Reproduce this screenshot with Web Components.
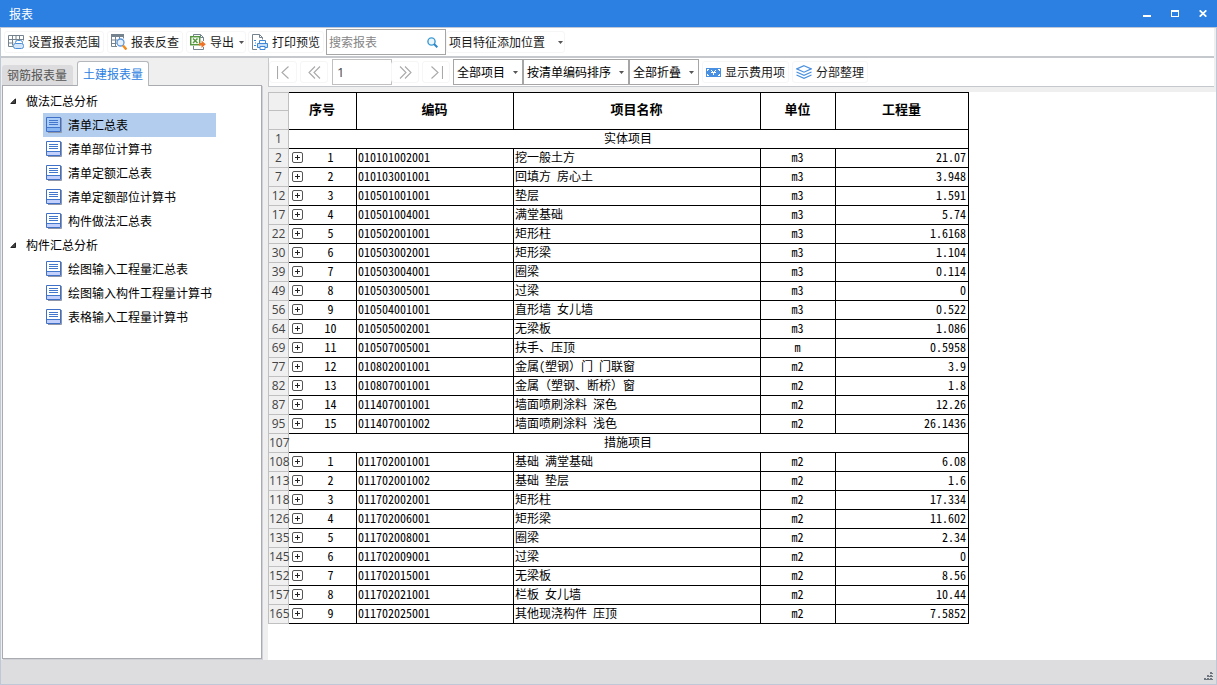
<!DOCTYPE html>
<html lang="zh-CN">
<head>
<meta charset="utf-8">
<meta name="viewport" content="width=device-width, initial-scale=1">
<title>报表</title>
<style>
  html, body { margin: 0; height: 100%; }
  body {
    font: 12px/18px "Noto Sans CJK SC", sans-serif;
    color: #1a1a1a;
    background: #efefef;
  }
</style>
</head>
<body>
<report-window></report-window>

<script>
const ICONS = {
  range: [16, 16, `<path d="M.5 1.500h15v5M.5 1.500v11H5M.5 5.500h15M.5 9h5M4.500 1.500v10M8 1.500v5M11.500 1.500v4" fill="none" stroke="#75838f"/><rect x="7.500" y="6.500" width="7" height="4" rx="2" fill="#fff" stroke="#4a8fd6"/><rect x="5.500" y="9.500" width="10" height="5" rx="2" fill="#d5e6f8" stroke="#4a8fd6"/>`],
  lookup: [16, 16, `<path d="M0 0h13v3H0z" fill="#75838f"/><path d="M.5.5v12H6M12.500.5v4M.5 6h6M.5 9.500h5M4.500 3v10M8.500 3v2" fill="none" stroke="#75838f"/><circle cx="9.500" cy="8.500" r="3.500" fill="#e7f1fb" stroke="#5b97dc" stroke-width="1.300"/><path d="M12 11.500l3.500 4" stroke="#f08c1c" stroke-width="2.400"/>`],
  export: [16, 16, `<path d="M3.500 2V.5h7l3 3V7M13.500 13v2.500h-10V12" fill="none" stroke="#75838f"/><path d="M10.500.5v3h3" fill="none" stroke="#75838f"/><rect x=".7" y="2.700" width="9" height="8" fill="#fff" stroke="#559840" stroke-width="1.500"/><path d="M3 4.500l4.500 4.500M7.500 4.500L3 9" stroke="#559840" stroke-width="1.500"/><path d="M9 9h2.500V6.500l4.300 3.800-4.300 3.700v-2.500H9z" fill="#ef7327"/>`],
  print: [16, 16, `<path d="M5 15.500H.5V.5h7l3 3v2M7.500.5v3h3" fill="none" stroke="#75838f"/><path d="M2 6h2v1H2zM3 8.500h1v1H3zM2 11h2v1H2z" fill="#3f87d8"/><path d="M7.500 9V6.500h6V9" fill="#fff" stroke="#3f87d8"/><path d="M5.500 9.500h10v4h-10z" fill="#c9dff6" stroke="#3f87d8"/><path d="M8 12.500h5v3H8z" fill="#fff" stroke="#3f87d8"/>`],
  search: [11, 11, `<circle cx="4.500" cy="4.500" r="3.600" fill="#eaf5fc" stroke="#3d9ad0" stroke-width="1.400"/><path d="M7 7l3.300 3.300" stroke="#2c86c8" stroke-width="2"/>`],
  caret: [5, 3, `<path d="M0 0h5L2.500 3z" fill="#555"/>`],
  first: [13, 13, `<path d="M.5 0v13M11.500.5L5 6.500l6.500 6" fill="none" stroke="#a9a9a9" stroke-width="1.100"/>`],
  prev: [13, 13, `<path d="M7 .5L1 6.500l6 6M12 .5L6 6.500l6 6" fill="none" stroke="#a9a9a9" stroke-width="1.100"/>`],
  next: [13, 13, `<path d="M6 .5l6 6-6 6M1 .5l6 6-6 6" fill="none" stroke="#a9a9a9" stroke-width="1.100"/>`],
  last: [13, 13, `<path d="M12.500 0v13M1.500.5L8 6.500l-6.500 6" fill="none" stroke="#a9a9a9" stroke-width="1.100"/>`],
  fee: [15, 9, `<path d="M0 0h15v9H0z" fill="#4a90e2"/><path d="M1 1h2v1H2v1H1zM12 1h2v2h-1V2h-1zM1 6h1v1h1v1H1zM13 6h1v2h-2V7h1z" fill="#fff"/><path d="M5 2h1v1H5zM9 2h1v1H9zM6 3h1v1H6zM8 3h1v1H8zM5 4h5v1H8v2H7V5H5z" fill="#fff"/>`],
  layers: [16, 14, `<path d="M8 .7l7.300 3.200L8 7.200.7 3.900zM.5 7L8 10.300 15.500 7M.5 10L8 13.300 15.500 10" fill="none" stroke="#4a90de" stroke-width="1.200"/>`],
  sheet: [16, 16, `<path d="M2 15.500h13.500V1" fill="none" stroke="#8f97a8"/><path d="M.5.5h14v14H.5z" fill="var(--sheet, #fff)" stroke="#3f6fc6"/><path d="M1 11h13v3H1z" fill="var(--sheet-foot, #c2d0fb)"/><path d="M3 3.500h9M3 5.500h9M3 7.500h9M1 10.500h13" stroke="#4377cb"/>`],
  expanded: [6, 6, `<path d="M5.500.8v4.700H.8z" fill="#444" stroke="#222"/>`],
  plus: [11, 11, `<rect x=".5" y=".5" width="10" height="10" rx="1.500" fill="#fff" stroke="#555"/><path d="M3 5.500h5M5.500 3v5" stroke="#222"/>`],
  minimize: [8, 7, `<path d="M0 5h8v2H0z" fill="#fff"/>`],
  maximize: [8, 7, `<path d="M0 0h8v7H0zM1 2v4h6V2z" fill="#fff" fill-rule="evenodd"/>`],
  close: [8, 7, `<path d="M.7.3l6.600 6.400M7.300.3L.7 6.700" stroke="#fff" stroke-width="1.700"/>`],
  grip: [9, 9, `<path d="M6 0h2v2H6zM3 3h2v2H3zM6 3h2v2H6zM0 6h2v2H0zM3 6h2v2H3zM6 6h2v2H6z" fill="#6f7680"/><path d="M8 1h1v1H8zM5 4h1v1H5zM8 4h1v1H8zM2 7h1v1H2zM5 7h1v1H5zM8 7h1v1H8z" fill="#6f7680"/>`]
};

const icon = name => {
  const [w, h, body] = ICONS[name];
  return `<svg width="${w}" height="${h}" viewBox="0 0 ${w} ${h}" aria-hidden="true">${body}</svg>`;
};

const BASE = `
  * { box-sizing: border-box; }
  svg { display: block; flex: none; }
  button, input, select { font: inherit; color: inherit; margin: 0; border-radius: 0; }
  button { background: none; border: 0; padding: 0; }
`;

function define(tag, render) {
  customElements.define(tag, class extends HTMLElement {
    constructor() {
      super();
      this.attachShadow({ mode: "open" });
    }
    connectedCallback() {
      if (this.shadowRoot.childNodes.length) return;
      const t = document.createElement("template");
      t.innerHTML = `<style>${BASE}</style>` + render(this);
      this.shadowRoot.append(t.content.cloneNode(true));
    }
  });
}

define("title-bar", () => `
  <style>
    :host { display: flex; align-items: center; height: 27px; padding: 0 6px 0 9px; background: #2c80e2; color: #fff; }
    h1 { flex: 1; margin: 0; font: inherit; }
    nav { display: flex; gap: 12px; }
    button { display: grid; place-items: center; width: 16px; height: 20px; }
  </style>
  <h1><slot></slot></h1>
  <nav>
    <button aria-label="最小化">${icon("minimize")}</button>
    <button aria-label="最大化">${icon("maximize")}</button>
    <button aria-label="关闭">${icon("close")}</button>
  </nav>`);

define("tool-button", el => {
  const glyph = el.getAttribute("icon");
  return `
  <style>
    :host { display: block; }
    button { display: flex; align-items: center; gap: 4px; height: 22px; padding: 0 3px; border: 1px solid #f6f6f7; border-radius: 3px; white-space: nowrap; }
    :host([menu]) button { padding-right: 1px; }
    .menu { margin-left: 1px; }
    :host([far]) button { padding-left: 2px; gap: 8px; }
    :host([far]) .menu { margin-left: 5px; }
    :host([bare]) button { justify-content: center; width: 28px; }
  </style>
  <button aria-label="${el.getAttribute("label") || el.textContent}">${glyph ? icon(glyph) : ""}${el.hasAttribute("bare") ? "" : "<slot></slot>"}${el.hasAttribute("menu") ? `<span class="menu">${icon("caret")}</span>` : ""}</button>`;
});

define("search-box", () => `
  <style>
    :host { display: flex; align-items: center; width: 120px; height: 26px; padding: 0 7px 0 2px; border: 1px solid #a6a6a6; background: #fff; }
    input { flex: 1; min-width: 0; border: 0; padding: 0; outline: 0; background: none; }
    input::placeholder { color: #858585; opacity: 1; }
  </style>
  <input type="search" placeholder="搜索报表" aria-label="搜索报表">
  <button aria-label="搜索">${icon("search")}</button>`);

define("drop-down", el => `
  <style>
    :host { display: inline-grid; align-items: center; }
    select, svg { grid-area: 1 / 1; }
    select { appearance: none; height: 26px; padding: 0 16px 0 3px; border: 1px solid #a6a6a6; background: #fff; color: #000; outline: 0; }
    svg { justify-self: end; margin-right: 5px; pointer-events: none; }
  </style>
  <select aria-label="${el.getAttribute("label")}"><option>${el.getAttribute("value")}</option></select>${icon("caret")}`);

define("main-toolbar", () => `
  <style>
    :host { display: flex; align-items: center; gap: 2px; height: 30px; padding: 0 3px; margin-right: 2px; background: #fff; border-bottom: 2px solid #c5c8cd; }
    .reports { display: flex; gap: 3px; padding-right: 1px; }
    tool-button[far] { margin-left: -2px; }
  </style>
  <div class="reports">
    <tool-button icon="range">设置报表范围</tool-button>
    <tool-button icon="lookup">报表反查</tool-button>
  </div>
  <tool-button icon="export" menu>导出</tool-button>
  <tool-button icon="print">打印预览</tool-button>
  <search-box></search-box>
  <tool-button menu far>项目特征添加位置</tool-button>`);

define("view-toolbar", () => `
  <style>
    :host { display: flex; align-items: center; height: 29px; margin-right: 2px; background: #fff; border: solid #c5c8cd; border-width: 0 0 1px 1px; }
    div { display: flex; align-items: center; }
    .pager input { width: 60px; height: 26px; margin-left: 4px; padding: 0 4px; border: 1px solid #c0c0c0; background: #fff; outline: 0; font: 13px "Open Sans", sans-serif; color: #444; }
    .steps { gap: 3px; }
    .forward { margin-left: -1px; }
    .filters { margin: 0 3px; }
    .actions { gap: 3px; }
  </style>
  <div class="pager">
    <div class="steps">
      <tool-button icon="first" bare label="首页"></tool-button>
      <tool-button icon="prev" bare label="上一页"></tool-button>
    </div>
    <input type="text" value="1" aria-label="页码">
    <div class="steps forward">
      <tool-button icon="next" bare label="下一页"></tool-button>
      <tool-button icon="last" bare label="末页"></tool-button>
    </div>
  </div>
  <div class="filters">
    <drop-down label="项目范围" value="全部项目"></drop-down>
    <drop-down label="排序方式" value="按清单编码排序"></drop-down>
    <drop-down label="折叠方式" value="全部折叠"></drop-down>
  </div>
  <div class="actions">
    <tool-button icon="fee">显示费用项</tool-button>
    <tool-button icon="layers">分部整理</tool-button>
  </div>`);

define("report-tabs", () => `
  <style>
    :host { display: flex; align-items: flex-end; gap: 4px; height: 27px; }
    button { height: 20px; padding: 0 6px; color: #555; background: #dcdcde; border-radius: 3px 3px 0 0; }
    button[aria-selected=false] { padding: 0 6px 0 5px; }
    button[aria-selected=true] { height: 25px; margin-bottom: -1px; color: #2c80e2; background: #fff; border: 1px solid #b4b7bc; border-bottom: 0; z-index: 1; padding: 0 5px; }
  </style>
  <button role="tab" aria-selected="false">钢筋报表量</button>
  <button role="tab" aria-selected="true">土建报表量</button>`);

define("tree-item", () => `
  <style>
    :host { display: block; }
    button { display: flex; align-items: center; gap: 6px; width: 100%; height: 24px; padding: 0 4px 0 3px; color: #000; white-space: nowrap; }
    :host([selected]) button { background: #b2cdee; --sheet: #a9cdf8; --sheet-foot: #86b5f2; }
  </style>
  <button>${icon("sheet")}<slot></slot></button>`);

define("tree-group", el => `
  <style>
    :host { display: block; }
    .head { display: flex; align-items: center; gap: 10px; height: 24px; color: #000; }
    .items { margin-left: 33px; }
  </style>
  <button class="head" aria-expanded="true">${icon("expanded")}${el.getAttribute("label")}</button>
  <div class="items"><slot></slot></div>`);

define("report-tree", () => `
  <style>
    :host { display: block; flex: 1; padding: 3px 0 0 7px; background: #fff; border: 1px solid #a9abb0; box-shadow: 1px 1px #cfd1d6; overflow: auto; }
    .tree { width: max-content; }
  </style>
  <div class="tree">
    <tree-group label="做法汇总分析">
      <tree-item selected>清单汇总表</tree-item>
      <tree-item>清单部位计算书</tree-item>
      <tree-item>清单定额汇总表</tree-item>
      <tree-item>清单定额部位计算书</tree-item>
      <tree-item>构件做法汇总表</tree-item>
    </tree-group>
    <tree-group label="构件汇总分析">
      <tree-item>绘图输入工程量汇总表</tree-item>
      <tree-item>绘图输入构件工程量计算书</tree-item>
      <tree-item>表格输入工程量计算书</tree-item>
    </tree-group>
  </div>`);

const ROWS = [
  [1, "实体项目"],
  [2, 1, "010101002001", "挖一般土方", "m3", "21.07"],
  [7, 2, "010103001001", "回填方 房心土", "m3", "3.948"],
  [12, 3, "010501001001", "垫层", "m3", "1.591"],
  [17, 4, "010501004001", "满堂基础", "m3", "5.74"],
  [22, 5, "010502001001", "矩形柱", "m3", "1.6168"],
  [30, 6, "010503002001", "矩形梁", "m3", "1.104"],
  [39, 7, "010503004001", "圈梁", "m3", "0.114"],
  [49, 8, "010503005001", "过梁", "m3", "0"],
  [56, 9, "010504001001", "直形墙 女儿墙", "m3", "0.522"],
  [64, 10, "010505002001", "无梁板", "m3", "1.086"],
  [69, 11, "010507005001", "扶手、压顶", "m", "0.5958"],
  [77, 12, "010802001001", "金属(塑钢）门 门联窗", "m2", "3.9"],
  [82, 13, "010807001001", "金属（塑钢、断桥）窗", "m2", "1.8"],
  [87, 14, "011407001001", "墙面喷刷涂料 深色", "m2", "12.26"],
  [95, 15, "011407001002", "墙面喷刷涂料 浅色", "m2", "26.1436"],
  [107, "措施项目"],
  [108, 1, "011702001001", "基础 满堂基础", "m2", "6.08"],
  [113, 2, "011702001002", "基础 垫层", "m2", "1.6"],
  [118, 3, "011702002001", "矩形柱", "m2", "17.334"],
  [126, 4, "011702006001", "矩形梁", "m2", "11.602"],
  [135, 5, "011702008001", "圈梁", "m2", "2.34"],
  [145, 6, "011702009001", "过梁", "m2", "0"],
  [152, 7, "011702015001", "无梁板", "m2", "8.56"],
  [157, 8, "011702021001", "栏板 女儿墙", "m2", "10.44"],
  [165, 9, "011702025001", "其他现浇构件 压顶", "m2", "7.5852"]
];

// Full-width brackets keep their full em; everything else in a cell uses half-width Latin.
const fullWidth = s => s.replace(/[（）]/g, c => `<span class="full">${c}</span>`);

const row = r => r.length === 2
  ? `<tr><th class="line" scope="row">${r[0]}</th><td class="section" colspan="5">${r[1]}</td></tr>`
  : `<tr><th class="line" scope="row">${r[0]}</th><td><div class="seq"><button aria-label="展开">${icon("plus")}</button><span>${r[1]}</span></div></td><td>${r[2]}</td><td>${fullWidth(r[3])}</td><td class="unit">${r[4]}</td><td class="qty">${r[5]}</td></tr>`;

define("report-table", () => `
  <style>
    :host { display: block; flex: 1; background: #fff; overflow: auto; }
    table { table-layout: fixed; width: 701px; border-collapse: separate; border-spacing: 0; color: #000; }
    .c-line { width: 21px; } .c-seq { width: 68px; } .c-code { width: 157px; }
    .c-name { width: 247px; } .c-unit { width: 75px; } .c-qty { width: 133px; }
    tr { height: 19px; }
    th, td { border: solid #000; border-width: 0 1px 1px 0; white-space: nowrap; }
    td { padding: 0 2px 2px 1px; line-height: 16px; text-align: left; font-feature-settings: "hwid"; }
    thead th { border-top-width: 1px; padding: 0 1px 4px 0; font-size: 13px; font-weight: 700; }
    th.line { padding: 0; border-color: #c0c0c0; border-left-width: 1px; background: #f0f0f0; color: #444; font: 12px/18px "Open Sans", sans-serif; text-align: center; }
    thead .line { height: 19px; }
    thead tr + tr .line { border-top-width: 0; }
    td.section, td.unit { text-align: center; }
    td.qty { text-align: right; }
    .full { font-feature-settings: normal; }
    .seq { display: flex; align-items: center; padding-left: 2px; }
    .seq button { padding-top: 1px; }
    .seq span { flex: 1; padding-left: 4px; text-align: center; }
  </style>
  <table>
    <colgroup><col class="c-line"><col class="c-seq"><col class="c-code"><col class="c-name"><col class="c-unit"><col class="c-qty"></colgroup>
    <thead>
      <tr><th class="line"></th><th rowspan="2" scope="col">序号</th><th rowspan="2" scope="col">编码</th><th rowspan="2" scope="col">项目名称</th><th rowspan="2" scope="col">单位</th><th rowspan="2" scope="col">工程量</th></tr>
      <tr><th class="line"></th></tr>
    </thead>
    <tbody>${ROWS.map(row).join("")}</tbody>
  </table>`);

define("status-bar", () => `
  <style>
    :host { display: flex; align-items: flex-end; justify-content: flex-end; height: 24px; padding: 0 3px 3px; background: #dddddf; }
  </style>
  ${icon("grip")}`);

define("report-window", () => `
  <style>
    :host { display: flex; flex-direction: column; min-height: 100vh; }
    .frame { display: flex; flex-direction: column; flex: 1; border: 1px solid #c0c7d6; background: #efefef; }
    .body { display: flex; flex: 1; gap: 5px; }
    aside { display: flex; flex-direction: column; width: 262px; padding: 0 1px 1px; background: #efefef; }
    main { display: flex; flex-direction: column; flex: 1; min-width: 0; gap: 5px; }
  </style>
  <title-bar>报表</title-bar>
  <div class="frame">
    <main-toolbar></main-toolbar>
    <div class="body">
      <aside><report-tabs></report-tabs><report-tree></report-tree></aside>
      <main><view-toolbar></view-toolbar><report-table></report-table></main>
    </div>
    <status-bar></status-bar>
  </div>`);
</script>
</body>
</html>
